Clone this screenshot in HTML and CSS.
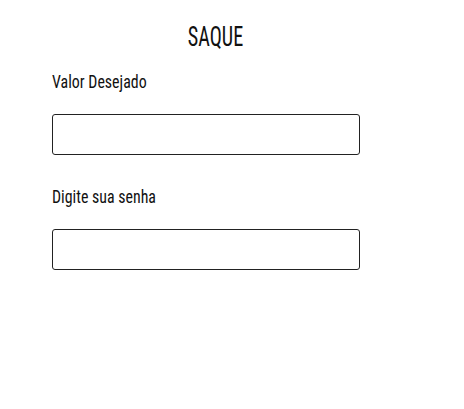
FILE: index.html
```html
<!DOCTYPE html>
<html lang="pt-BR">
<head>
<meta charset="utf-8">
<title>Saque</title>
<link rel="stylesheet" href="styles.css">
</head>
<body>
<form class="saque">
  <h1 class="titulo"><span class="cond">SAQUE</span></h1>
  <label class="campo">
    <span class="rotulo"><span class="cond">Valor Desejado</span></span>
    <input class="entrada" type="text">
  </label>
  <label class="campo">
    <span class="rotulo"><span class="cond">Digite sua senha</span></span>
    <input class="entrada" type="password">
  </label>
</form>
</body>
</html>
```
FILE: styles.css
```css
html, body { margin: 0; padding: 0; background: #fff; }
body {
  font-family: "Roboto Condensed", "DejaVu Sans Condensed", sans-serif;
  color: #111;
}
.saque {
  width: 327px;
  margin-left: 52px;
  padding-top: 20px;
  display: flex;
  flex-direction: column;
}
.titulo {
  margin: 0;
  font-size: 28px;
  font-weight: 400;
  line-height: 34px;
  text-align: center;
}
.cond {
  display: inline-block;
  transform: scaleX(0.86);
  transform-origin: left center;
}
.titulo .cond {
  transform: scaleX(0.72);
  transform-origin: center center;
}
.campo {
  display: flex;
  flex-direction: column;
}
.rotulo {
  font-size: 18.5px;
  line-height: 24px;
  margin-top: 16px;
  margin-bottom: 20px;
}
.campo + .campo .rotulo { margin-top: 30px; }
.entrada {
  box-sizing: border-box;
  width: 308px;
  height: 41px;
  margin: 0;
  border: 1px solid #222;
  border-radius: 3px;
  background: #fff;
  padding: 0 8px;
  font: inherit;
}
```
